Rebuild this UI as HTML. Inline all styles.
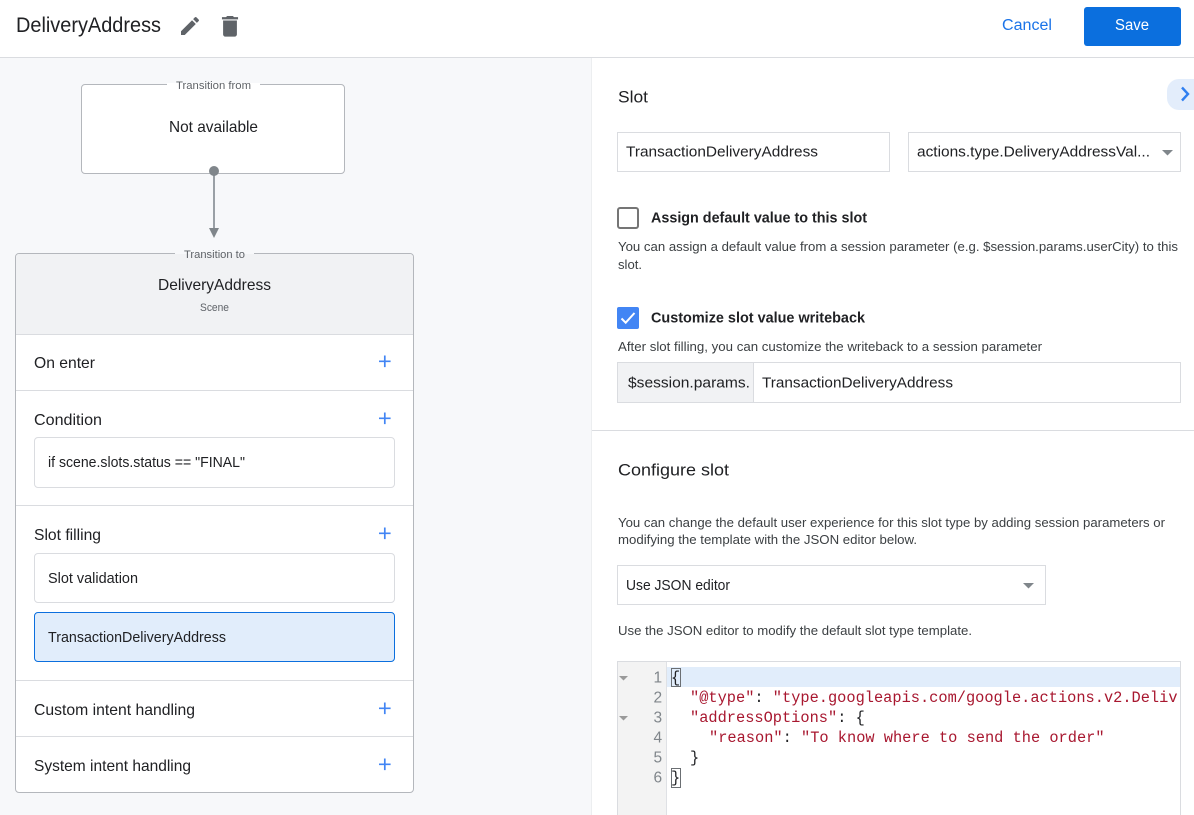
<!DOCTYPE html>
<html lang="en">
<head>
<meta charset="utf-8">
<title>DeliveryAddress</title>
<style>
html,body{margin:0;padding:0;background:#fff;width:1194px;height:815px;overflow:hidden}
svg{display:block}
text{font-family:"Liberation Sans",Arial,sans-serif;fill:#202124;white-space:pre}
.mono{font-family:"Liberation Mono",monospace;font-size:15.33px}
.r{fill:#a8172f}
.k{fill:#202124}
.n{fill:#80868b;font-size:15.5px}
.d{font-size:13px;fill:#3c4043}
.b{font-size:14.5px;font-weight:700}
.s{font-size:14.8px}
.h{font-size:15.6px}
.l{font-size:11.3px;fill:#5f6368}
</style>
</head>
<body>
<svg width="1194" height="815" viewBox="0 0 1194 815" xmlns="http://www.w3.org/2000/svg">
<defs><clipPath id="c"><rect x="667" y="662" width="513" height="153"/></clipPath></defs>
<rect width="1194" height="815" fill="#fff"/>
<rect x="0" y="58" width="591" height="757" fill="#f7f8fa"/>
<rect x="0" y="57" width="1194" height="1" fill="#dadce0"/>
<rect x="591" y="58" width="1" height="757" fill="#eceef0"/>

<text x="16" y="32" font-size="20.800" textLength="145" lengthAdjust="spacingAndGlyphs">DeliveryAddress</text>
<path transform="translate(178,14)" d="M3 17.25V21h3.75L17.81 9.94l-3.75-3.75L3 17.25zM20.71 7.04a1 1 0 0 0 0-1.41l-2.34-2.34a1 1 0 0 0-1.41 0l-1.83 1.83 3.75 3.75 1.83-1.83z" fill="#5f6368"/>
<path transform="translate(216.200,12.500) scale(1.150)" d="M6 19c0 1.100.9 2 2 2h8c1.100 0 2-.9 2-2V7H6v12zM19 4h-3.500l-1-1h-5l-1 1H5v2h14V4z" fill="#5f6368"/>
<text x="1002" y="30" font-size="15.500" style="fill:#1a73e8" textLength="50" lengthAdjust="spacingAndGlyphs">Cancel</text>
<rect x="1084" y="7" width="97" height="39" rx="3" fill="#0b6fde"/>
<text x="1115" y="30" font-size="15.500" style="fill:#fff" textLength="34" lengthAdjust="spacingAndGlyphs">Save</text>

<rect x="81.500" y="84.500" width="263" height="89" rx="3.500" fill="#fff" stroke="#b4b7bc"/>
<rect x="167" y="83" width="93" height="3" fill="#fff"/>
<text class="l" x="176" y="89" textLength="75" lengthAdjust="spacingAndGlyphs">Transition from</text>
<text class="h" x="169" y="132" textLength="89" lengthAdjust="spacingAndGlyphs">Not available</text>
<rect x="213" y="172" width="2" height="57" fill="#9aa0a6"/>
<circle cx="214" cy="171" r="5" fill="#80868b"/>
<path d="M209 228h10l-5 10z" fill="#80868b"/>

<rect x="15.500" y="253.500" width="398" height="539" rx="3.500" fill="#fff" stroke="#b4b7bc"/>
<path d="M16 334V257a3 3 0 0 1 3-3H410a3 3 0 0 1 3 3V334z" fill="#f1f2f4"/>
<rect x="175" y="252" width="79" height="3" fill="#f7f8fa"/>
<rect x="175" y="254" width="79" height="1" fill="#f1f2f4"/>
<text class="l" x="184" y="258" textLength="61" lengthAdjust="spacingAndGlyphs">Transition to</text>
<text class="h" x="158" y="290" textLength="113" lengthAdjust="spacingAndGlyphs">DeliveryAddress</text>
<text x="200" y="311" font-size="11" style="fill:#5f6368" textLength="29" lengthAdjust="spacingAndGlyphs">Scene</text>
<g fill="#dadce0">
<rect x="16" y="334" width="397" height="1"/>
<rect x="16" y="390" width="397" height="1"/>
<rect x="16" y="505" width="397" height="1"/>
<rect x="16" y="680" width="397" height="1"/>
<rect x="16" y="736" width="397" height="1"/>
</g>
<text class="h" x="34" y="368" textLength="61" lengthAdjust="spacingAndGlyphs">On enter</text>
<text class="h" x="34" y="425" textLength="68" lengthAdjust="spacingAndGlyphs">Condition</text>
<text class="h" x="34" y="540" textLength="67" lengthAdjust="spacingAndGlyphs">Slot filling</text>
<text class="h" x="34" y="715" textLength="161" lengthAdjust="spacingAndGlyphs">Custom intent handling</text>
<text class="h" x="34" y="771" textLength="157" lengthAdjust="spacingAndGlyphs">System intent handling</text>
<g stroke="#4285f4" stroke-width="1.700" fill="none">
<path d="M379 361.300h11.600M384.800 355.500v11.600"/>
<path d="M379 418.300h11.600M384.800 412.500v11.600"/>
<path d="M379 533.300h11.600M384.800 527.500v11.600"/>
<path d="M379 708.300h11.600M384.800 702.500v11.600"/>
<path d="M379 764.300h11.600M384.800 758.500v11.600"/>
</g>
<rect x="34.500" y="437.500" width="360" height="50" rx="3.500" fill="#fff" stroke="#dadce0"/>
<text class="s" x="48" y="467" textLength="197" lengthAdjust="spacingAndGlyphs">if scene.slots.status == "FINAL"</text>
<rect x="34.500" y="553.500" width="360" height="49" rx="3.500" fill="#fff" stroke="#dadce0"/>
<text class="s" x="48" y="583" textLength="90" lengthAdjust="spacingAndGlyphs">Slot validation</text>
<rect x="34.500" y="612.500" width="360" height="49" rx="3.500" fill="#e1edfb" stroke="#0b6fde"/>
<text class="s" x="48" y="642" textLength="178" lengthAdjust="spacingAndGlyphs">TransactionDeliveryAddress</text>

<text x="618" y="102.500" font-size="16.500" textLength="30" lengthAdjust="spacingAndGlyphs">Slot</text>
<path d="M1194 79h-15a12 12 0 0 0-12 12v7a12 12 0 0 0 12 12h15z" fill="#e3edfb"/>
<path d="M1182 87.500l6 6.500-6 6.500" fill="none" stroke="#2f7ff0" stroke-width="2.400"/>
<rect x="617.500" y="132.500" width="272" height="39" fill="#fff" stroke="#dadce0"/>
<text class="s" x="626" y="156.500" textLength="192" lengthAdjust="spacingAndGlyphs">TransactionDeliveryAddress</text>
<rect x="908.500" y="132.500" width="272" height="39" fill="#fff" stroke="#dadce0"/>
<text class="s" x="917" y="156.500" textLength="233" lengthAdjust="spacingAndGlyphs">actions.type.DeliveryAddressVal...</text>
<path d="M1162 150h11l-5.500 5.500z" fill="#80868b"/>

<rect x="618" y="208" width="20" height="20" rx="2" fill="#fff" stroke="#757575" stroke-width="2"/>
<text class="b" x="651" y="222.500" textLength="216" lengthAdjust="spacingAndGlyphs">Assign default value to this slot</text>
<text class="d" x="618" y="251" textLength="560" lengthAdjust="spacingAndGlyphs">You can assign a default value from a session parameter (e.g. $session.params.userCity) to this</text>
<text class="d" x="618" y="269" textLength="24" lengthAdjust="spacingAndGlyphs">slot.</text>
<rect x="617" y="307" width="22" height="22" rx="2" fill="#4285f4"/>
<path d="M621.500 318.500l4.200 4.200 8.800-9.700" fill="none" stroke="#fff" stroke-width="2"/>
<text class="b" x="651" y="322.500" textLength="214" lengthAdjust="spacingAndGlyphs">Customize slot value writeback</text>
<text class="d" x="618" y="351" textLength="424" lengthAdjust="spacingAndGlyphs">After slot filling, you can customize the writeback to a session parameter</text>
<rect x="617.500" y="362.500" width="563" height="40" fill="#fff" stroke="#dadce0"/>
<rect x="618" y="363" width="135" height="39" fill="#f1f2f4"/>
<rect x="753" y="363" width="1" height="39" fill="#dadce0"/>
<text class="s" x="628" y="387.500" textLength="122" lengthAdjust="spacingAndGlyphs">$session.params.</text>
<text class="s" x="762" y="387.500" textLength="191" lengthAdjust="spacingAndGlyphs">TransactionDeliveryAddress</text>
<rect x="592" y="430" width="602" height="1" fill="#dadce0"/>

<text x="618" y="475.500" font-size="16.500" textLength="111" lengthAdjust="spacingAndGlyphs">Configure slot</text>
<text class="d" x="618" y="527" textLength="547" lengthAdjust="spacingAndGlyphs">You can change the default user experience for this slot type by adding session parameters or</text>
<text class="d" x="618" y="544" textLength="299" lengthAdjust="spacingAndGlyphs">modifying the template with the JSON editor below.</text>
<rect x="617.500" y="565.500" width="428" height="39" fill="#fff" stroke="#dadce0"/>
<text class="s" x="626" y="590" textLength="104" lengthAdjust="spacingAndGlyphs">Use JSON editor</text>
<path d="M1023 583h11l-5.500 5.500z" fill="#80868b"/>
<text class="d" x="618" y="635" textLength="354" lengthAdjust="spacingAndGlyphs">Use the JSON editor to modify the default slot type template.</text>

<rect x="617.500" y="661.500" width="563" height="160" fill="#fff" stroke="#dadce0"/>
<rect x="618" y="662" width="48" height="153" fill="#f3f3f3"/>
<rect x="666" y="662" width="1" height="153" fill="#dfe1e5"/>
<rect x="667" y="667" width="513" height="20" fill="#e1edfb"/>
<path d="M619 676h9l-4.500 4.500z" fill="#9a9a9a"/>
<path d="M619 716h9l-4.500 4.500z" fill="#9a9a9a"/>
<text class="n" x="653.500" y="682.500">1</text>
<text class="n" x="653.500" y="702.500">2</text>
<text class="n" x="653.500" y="722.500">3</text>
<text class="n" x="653.500" y="742.500">4</text>
<text class="n" x="653.500" y="762.500">5</text>
<text class="n" x="653.500" y="782.500">6</text>
<rect x="671.500" y="668.500" width="9" height="18" fill="none" stroke="#6b6f73"/>
<rect x="671.500" y="768.500" width="9" height="19" fill="none" stroke="#6b6f73"/>
<g clip-path="url(#c)">
<text class="mono k" x="671" y="682">{</text>
<text class="mono" x="690" y="702"><tspan class="r">"@type"</tspan><tspan class="k">: </tspan><tspan class="r">"type.googleapis.com/google.actions.v2.Deliv</tspan></text>
<text class="mono" x="690" y="722"><tspan class="r">"addressOptions"</tspan><tspan class="k">: {</tspan></text>
<text class="mono" x="709" y="742"><tspan class="r">"reason"</tspan><tspan class="k">: </tspan><tspan class="r">"To know where to send the order"</tspan></text>
<text class="mono k" x="690" y="762">}</text>
<text class="mono k" x="671" y="782">}</text>
</g>
</svg>
</body>
</html>
